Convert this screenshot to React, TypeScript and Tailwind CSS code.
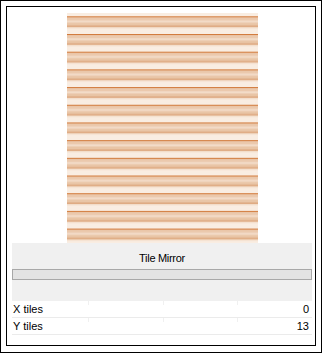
const rows = [
  { label: "X tiles", value: "0" },
  { label: "Y tiles", value: "13" },
];

const StripePreview = () => (
  <svg width="191" height="230" viewBox="0 0 191 230" className="block">
    <defs>
      <pattern
        id="stripes"
        patternUnits="userSpaceOnUse"
        width="191"
        height="17.69"
        patternTransform="translate(0,3.3)">
        <rect x="0" y="0" width="191" height="17.69" fill="#f9ede2" />
        <rect x="0" y="0" width="191" height="1.4" fill="#d27b3c" />
        <rect x="0" y="1.4" width="191" height="3.2" fill="#ebc9ad" />
        <rect x="0" y="4.6" width="191" height="1.6" fill="#f3dcc8" />
        <rect x="0" y="6.2" width="191" height="2.8" fill="#e9c5a6" />
        <rect x="0" y="9" width="191" height="2.2" fill="#dfab83" />
        <rect x="0" y="11.2" width="191" height="1.2" fill="#f6e4d4" />
      </pattern>
    </defs>
    <rect width="191" height="230" fill="url(#stripes)" />
  </svg>
);

export default function App() {
  return (
    <div
      className="w-[322px] h-[353px] bg-white border border-black p-[5px] pb-[6px]"
      style={{ fontFamily: '"Liberation Sans", Arial, sans-serif' }}>
      <div className="h-full border border-black flex flex-col pl-[5px] pr-[3px]">
        <div className="flex justify-center pt-[6px] pl-[1px]">
          <StripePreview />
        </div>
        <div className="bg-[#f0f0f0] h-[58px] flex flex-col">
          <div className="text-[11px] leading-[14px] text-black text-center pt-[8px] tracking-[-0.3px]">
            Tile Mirror
          </div>
          <div className="mt-[4px] h-[11px] bg-[#e3e3e3] border border-[#a8a8a8]" />
        </div>
        {rows.map((row) => (
          <div
            key={row.label}
            className="relative h-[17px] flex items-center justify-between border-b border-[#ebebeb] text-[11px] text-black pl-[1px] pr-[3px]">
            <span className="absolute left-[76px] top-0 h-[4px] w-px bg-[#f0f0f0]" />
            <span className="absolute left-[151px] top-0 h-[4px] w-px bg-[#f0f0f0]" />
            <span className="absolute left-[225px] top-0 h-[4px] w-px bg-[#f0f0f0]" />
            <span>{row.label}</span>
            <span>{row.value}</span>
          </div>
        ))}
      </div>
    </div>
  );
}
